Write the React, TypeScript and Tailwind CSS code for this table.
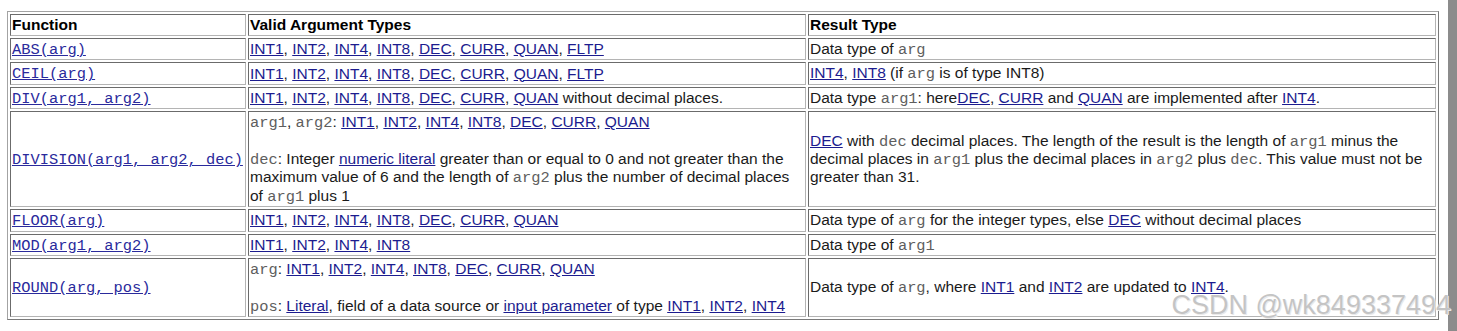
import React from "react";

const sans = "font-['Liberation_Sans',Arial,sans-serif]";
const linkCls = "text-[#1c1c8f] underline";

function A({ children }: { children: React.ReactNode }) {
  return <a className={linkCls}>{children}</a>;
}

function Code({ children }: { children: React.ReactNode }) {
  return (
    <code className="font-['Liberation_Mono','Courier_New',monospace] text-[15.4px] leading-none text-[#5e5e5e]">
      {children}
    </code>
  );
}

function Types({ items }: { items: string[] }) {
  return (
    <>
      {items.map((t, i) => (
        <React.Fragment key={t}>
          <A>{t}</A>
          {i < items.length - 1 ? ", " : ""}
        </React.Fragment>
      ))}
    </>
  );
}

function Fn({ name }: { name: string }) {
  return (
    <a className="font-['Liberation_Mono','Courier_New',monospace] text-[15.4px] leading-none text-[#2a2a9c] underline whitespace-pre">
      {name}
    </a>
  );
}

const all = ["INT1", "INT2", "INT4", "INT8", "DEC", "CURR", "QUAN", "FLTP"];
const noFltp = ["INT1", "INT2", "INT4", "INT8", "DEC", "CURR", "QUAN"];
const ints = ["INT1", "INT2", "INT4", "INT8"];

const td =
  "p-[1px] border border-t-[#6b6b6b] border-l-[#6b6b6b] border-b-[#b4b4b4] border-r-[#b4b4b4] align-middle text-left";

type Row = { fn: string; args: React.ReactNode; result: React.ReactNode; tall?: boolean };

export default function App() {
  const rows: Row[] = [
    {
      fn: "ABS(arg)",
      args: <Types items={all} />,
      result: (
        <>
          Data type of <Code>arg</Code>
        </>
      ),
    },
    {
      fn: "CEIL(arg)",
      args: <Types items={all} />,
      result: (
        <>
          <A>INT4</A>, <A>INT8</A> (if <Code>arg</Code> is of type INT8)
        </>
      ),
    },
    {
      fn: "DIV(arg1, arg2)",
      args: (
        <>
          <Types items={noFltp} /> without decimal places.
        </>
      ),
      result: (
        <>
          Data type <Code>arg1</Code>: here<A>DEC</A>, <A>CURR</A> and <A>QUAN</A> are implemented
          after <A>INT4</A>.
        </>
      ),
    },
    {
      fn: "DIVISION(arg1, arg2, dec)",
      tall: true,
      args: (
        <>
          <Code>arg1</Code>, <Code>arg2</Code>: <Types items={noFltp} />
          <br />
          <br />
          <Code>dec</Code>: Integer <A>numeric literal</A> greater than or equal to 0 and not
          greater than the maximum value of 6 and the length of <Code>arg2</Code> plus the number
          of decimal places of <Code>arg1</Code> plus 1
        </>
      ),
      result: (
        <>
          <A>DEC</A> with <Code>dec</Code> decimal places. The length of the result is the length
          of <Code>arg1</Code> minus the decimal places in <Code>arg1</Code> plus the decimal places
          in <Code>arg2</Code> plus <Code>dec</Code>. This value must not be greater than 31.
        </>
      ),
    },
    {
      fn: "FLOOR(arg)",
      args: <Types items={noFltp} />,
      result: (
        <>
          Data type of <Code>arg</Code> for the integer types, else <A>DEC</A> without decimal
          places
        </>
      ),
    },
    {
      fn: "MOD(arg1, arg2)",
      args: <Types items={ints} />,
      result: (
        <>
          Data type of <Code>arg1</Code>
        </>
      ),
    },
    {
      fn: "ROUND(arg, pos)",
      tall: true,
      args: (
        <>
          <Code>arg</Code>: <Types items={noFltp} />
          <br />
          <br />
          <Code>pos</Code>: <A>Literal</A>, field of a data source or <A>input parameter</A> of type{" "}
          <Types items={["INT1", "INT2", "INT4"]} />
        </>
      ),
      result: (
        <>
          Data type of <Code>arg</Code>, where <A>INT1</A> and <A>INT2</A> are updated to{" "}
          <A>INT4</A>.
        </>
      ),
    },
  ];

  return (
    <div className={`relative flex h-[331px] w-full bg-white ${sans} text-[15.5px] leading-[18px] text-[#1a1a1a]`}>
      <div className="flex-1 pl-[7px] pt-[11px]">
        <table className="w-[1432px] table-fixed border-separate border-spacing-[2px] border border-t-[#a3a3a3] border-l-[#a3a3a3] border-b-[#7a7a7a] border-r-[#7a7a7a]">
          <colgroup>
            <col className="w-[236px]" />
            <col className="w-[558px]" />
            <col className="w-[628px]" />
          </colgroup>
          <thead>
            <tr className="font-bold text-black">
              <th className={td}>Function</th>
              <th className={td}>Valid Argument Types</th>
              <th className={td}>Result Type</th>
            </tr>
          </thead>
          <tbody>
            {rows.map((r) => (
              <tr key={r.fn} className={r.tall ? "leading-[18.4px]" : ""}>
                <td className={td}>
                  <Fn name={r.fn} />
                </td>
                <td className={td}>{r.args}</td>
                <td className={td}>{r.result}</td>
              </tr>
            ))}
          </tbody>
        </table>
      </div>
      <div className="w-[9px] shrink-0 bg-[#8c8c8c]" />
      <div className="pointer-events-none absolute right-[6px] top-[290px] text-[27px] leading-[30px] text-[#c4c4c4] [text-shadow:0_0_1px_#ffffff,1px_1px_0_#e8e8e8]">
        CSDN @wk849337494
      </div>
    </div>
  );
}
